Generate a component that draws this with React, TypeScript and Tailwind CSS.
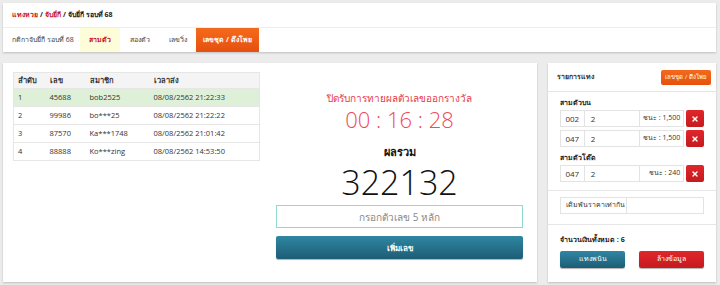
import { X } from "lucide-react";

const rows = [
  { no: 1, num: "45688", member: "bob2525", time: "08/08/2562 21:22:33", win: true },
  { no: 2, num: "99986", member: "bo***25", time: "08/08/2562 21:22:22" },
  { no: 3, num: "87570", member: "Ka***1748", time: "08/08/2562 21:01:42" },
  { no: 4, num: "88888", member: "Ko***zing", time: "08/08/2562 14:53:50" },
];

const BetRow = ({ num, amount, win }: { num: string; amount: string; win: string }) => (
  <div className="flex h-[17px] items-stretch text-[8px] whitespace-nowrap text-[#333]">
    <div className="flex w-[25px] items-center justify-center border border-[#e3e3e3]">{num}</div>
    <div className="flex w-[55px] items-center border-y border-[#e3e3e3] pl-[6px]">{amount}</div>
    <div className="flex w-[46px] items-center justify-end border border-[#e3e3e3] pr-[3px] text-[7px]">{win}</div>
    <button className="ml-[2px] flex w-[18px] items-center justify-center rounded-[2px] bg-gradient-to-b from-[#e0262b] to-[#c51a1e] text-white">
      <X size={8} strokeWidth={4} />
    </button>
  </div>
);

export default function App() {
  return (
    <div className="h-[285px] w-[720px] overflow-hidden bg-[#ececec] p-[3px] font-['Open_Sans','Noto_Sans',sans-serif]">
      {/* top bar: breadcrumb + tabs */}
      <div className="w-[713px] bg-white shadow-[0_1px_2px_rgba(0,0,0,0.2)]">
        <div className="flex h-[24px] items-center px-[9px] text-[7px] font-bold whitespace-nowrap text-[#222]">
          <span className="text-[#c9181e]">แทงหวย</span>
          <span className="mx-[2px]">/</span>
          <span className="text-[#c9181e]">จับยี่กี</span>
          <span className="mx-[2px]">/</span>
          <span>จับยี่กี รอบที่ 68</span>
        </div>
        <div className="flex h-[25px] items-stretch border-t border-[#eee] text-[7px] whitespace-nowrap text-[#444]">
          <div className="flex w-[77px] items-center pl-[9px]">กติกาจับยี่กี รอบที่ 68</div>
          <div className="flex w-[40px] items-center justify-center bg-[#fdfdd9] font-bold text-[#c9181e]">สามตัว</div>
          <div className="flex w-[39px] items-center justify-center">สองตัว</div>
          <div className="flex w-[37px] items-center justify-center">เลขวิ่ง</div>
          <div className="flex w-[63px] items-center justify-center bg-gradient-to-b from-[#f46a1c] to-[#e5500e] font-bold text-white">
            เลขชุด / ดึงโพย
          </div>
        </div>
      </div>

      <div className="mt-[11px] flex gap-[11px]">
        {/* main card */}
        <div className="flex h-[219px] w-[534px] gap-[16px] bg-white px-[10px] pt-[9px] shadow-[0_1px_2px_rgba(0,0,0,0.2)]">
          <table className="h-fit w-[247px] border border-[#e6e6e6] text-left text-[7.5px] whitespace-nowrap text-[#333]">
            <thead>
              <tr className="h-[16px] bg-[#f4f4f4] font-bold">
                <th className="pl-[4px]">ลำดับ</th>
                <th>เลข</th>
                <th>สมาชิก</th>
                <th>เวลาส่ง</th>
              </tr>
            </thead>
            <tbody>
              {rows.map((r) => (
                <tr key={r.no} className={`h-[18px] border-t border-[#e6e6e6] ${r.win ? "bg-[#dff0d8]" : ""}`}>
                  <td className="w-[36px] pl-[4px]">{r.no}</td>
                  <td className="w-[40px]">{r.num}</td>
                  <td className="w-[64px]">{r.member}</td>
                  <td>{r.time}</td>
                </tr>
              ))}
            </tbody>
          </table>

          <div className="flex w-[247px] flex-col items-center pt-[19px]">
            <div className="text-[10px] leading-[14px] whitespace-nowrap text-[#e8394a]">ปิดรับการทายผลตัวเลขออกรางวัล</div>
            <div className="mt-[1px] text-[22px] leading-[26px] font-light text-[#ef4a5a]">00 : 16 : 28</div>
            <div className="mt-[13px] text-[11px] leading-[14px] font-bold text-[#111]">ผลรวม</div>
            <div className="mt-[6px] text-[34px] leading-[34px] font-light text-[#111]">322132</div>
            <input
              className="mt-[6px] h-[23px] w-full border border-[#8fdccf] text-center text-[10px] outline-none placeholder:text-[#888]"
              placeholder="กรอกตัวเลข 5 หลัก"
            />
            <button className="mt-[8px] h-[23px] w-full rounded-[2px] bg-gradient-to-b from-[#2f87a3] to-[#1d5d75] text-[8px] font-bold text-white shadow-[0_1px_1px_rgba(0,0,0,0.3)]">
              เพิ่มเลข
            </button>
          </div>
        </div>

        {/* right card */}
        <div className="h-[219px] w-[168px] bg-white shadow-[0_1px_2px_rgba(0,0,0,0.2)]">
          <div className="flex h-[29px] items-center justify-between border-b border-[#e6e6e6] pr-[5px] pl-[9px]">
            <span className="text-[7px] font-bold text-[#333]">รายการแทง</span>
            <button className="h-[15px] w-[50px] rounded-[2px] bg-gradient-to-b from-[#f46a1c] to-[#e5500e] text-[6px] whitespace-nowrap text-white">
              เลขชุด / ดึงโพย
            </button>
          </div>
          <div className="px-[12px] pt-[4px]">
            <div className="text-[7px] leading-[14px] font-bold text-[#222]">สามตัวบน</div>
            <div className="flex flex-col gap-[3px]">
              <BetRow num="002" amount="2" win="ชนะ : 1,500" />
              <BetRow num="047" amount="2" win="ชนะ : 1,500" />
            </div>
            <div className="mt-[4px] text-[7px] leading-[14px] font-bold text-[#222]">สามตัวโต๊ด</div>
            <BetRow num="047" amount="2" win="ชนะ : 240" />
          </div>
          <div className="mt-[8px] border-t border-[#e6e6e6] px-[12px] pt-[6px]">
            <div className="flex h-[17px] text-[7px] whitespace-nowrap text-[#333]">
              <div className="flex w-[67px] items-center border border-[#e3e3e3] pl-[5px]">เดิมพันราคาเท่ากัน</div>
              <div className="w-[78px] border-y border-r border-[#e3e3e3]" />
            </div>
          </div>
          <div className="mt-[10px] border-t border-[#e6e6e6] px-[12px] pt-[9px]">
            <div className="text-[7px] leading-[12px] font-bold whitespace-nowrap text-[#222]">จำนวนเงินทั้งหมด : 6</div>
            <div className="mt-[5px] flex justify-between">
              <button className="h-[17px] w-[65px] rounded-[2px] bg-gradient-to-b from-[#2f87a3] to-[#1d5d75] text-[7px] text-white shadow-[0_1px_1px_rgba(0,0,0,0.3)]">
                แทงพนัน
              </button>
              <button className="h-[17px] w-[65px] rounded-[2px] bg-gradient-to-b from-[#e0262b] to-[#c51a1e] text-[7px] text-white shadow-[0_1px_1px_rgba(0,0,0,0.3)]">
                ล้างข้อมูล
              </button>
            </div>
          </div>
        </div>
      </div>
    </div>
  );
}
